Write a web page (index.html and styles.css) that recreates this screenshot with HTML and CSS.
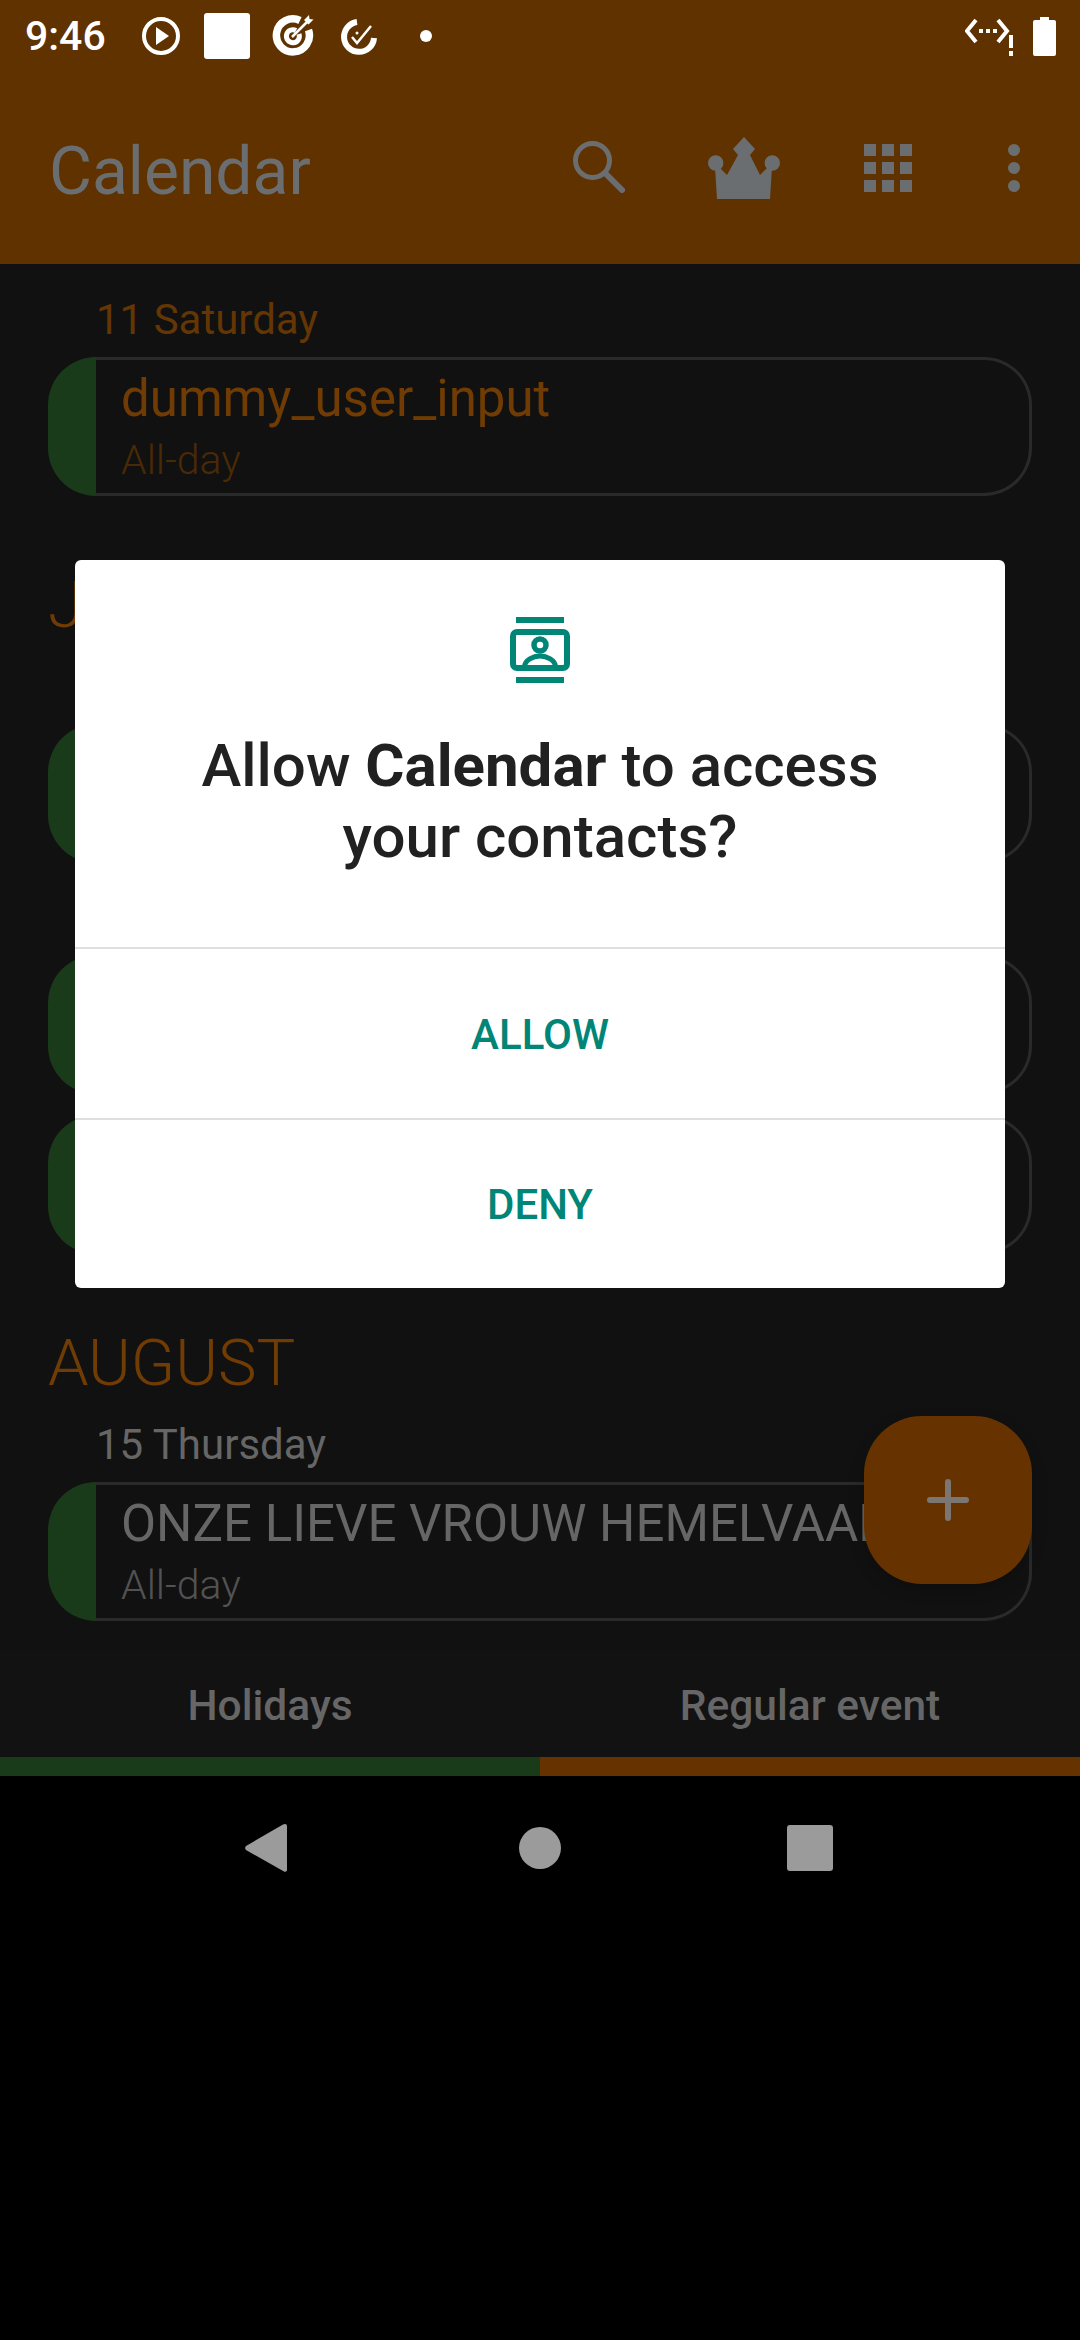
FILE: index.html
```html
<!DOCTYPE html>
<html lang="en">
<head>
    <meta charset="UTF-8">
    <meta name="viewport" content="width=device-width, initial-scale=1.0">
    <title>Calendar</title>
    <link rel="stylesheet" href="styles.css">
</head>
<body>
    <div class="screen">
        <header class="top">
            <div class="status">
                <span class="clock">9:46</span>
                <svg class="st-icon" width="40" height="40" viewBox="0 0 40 40"><circle cx="20" cy="20" r="17" fill="none" stroke="#fff" stroke-width="4"/><path d="M15 11l13 9-13 9z" fill="#fff"/></svg>
                <span class="st-square"></span>
                <svg class="st-icon" width="44" height="44" viewBox="0 0 44 44"><path d="M29 6.500A16.500 16.500 0 1 0 37.500 16" fill="none" stroke="#fff" stroke-width="7.500"/><path d="M25 16.500A6.500 6.500 0 1 0 28 20" fill="none" stroke="#fff" stroke-width="5"/><path d="M21 23L37 7" stroke="#fff" stroke-width="2.500"/><path d="M33 6l5-5 .5 4 4 .5-5 5z" fill="#fff"/></svg>
                <svg class="st-icon st-check" width="38" height="38" viewBox="0 0 38 38"><path d="M17 5A15 15 0 1 0 34 21" fill="none" stroke="#fff" stroke-width="6"/><path d="M12 20l5 6 14-17" fill="none" stroke="#fff" stroke-width="2.500"/><circle cx="17" cy="16" r="1.500" fill="#fff"/></svg>
                <span class="st-dot"></span>
                <span class="st-right">
                    <svg width="50" height="42" viewBox="0 0 50 42"><path d="M11 5L2 16l9 11M33 5l9 11-9 11" fill="none" stroke="#fff" stroke-width="4"/><path d="M14 14h4v4h-4zM21 14h4v4h-4zM28 14h4v4h-4z" fill="#fff"/><path d="M44 20h4v13h-4zM44 36h4v5h-4z" fill="#fff"/></svg>
                    <svg width="23" height="39" viewBox="0 0 23 39"><path d="M7 0h9v3h5a2 2 0 0 1 2 2v32a2 2 0 0 1-2 2H2a2 2 0 0 1-2-2V5a2 2 0 0 1 2-2h5z" fill="#fff"/></svg>
                </span>
            </div>
            <div class="appbar">
                <h1 class="app-title">Calendar</h1>
                <svg class="ab-search" width="52" height="52" viewBox="0 0 52 52"><circle cx="19.500" cy="19.500" r="17" fill="none" stroke="#6b6e70" stroke-width="5"/><path d="M33 33l16 16" stroke="#6b6e70" stroke-width="6" stroke-linecap="round"/></svg>
                <svg class="ab-crown" width="72" height="64" viewBox="0 0 72 64"><g fill="#6b6e70"><path d="M36 0l11 12-5 6 10 20 9-9 3 1-2 32H9L7 30l3-1 9 9 11-20-5-6z"/><circle cx="7.700" cy="26" r="7.700"/><circle cx="64.300" cy="26" r="7.700"/></g></svg>
                <div class="ab-grid">
                    <i></i><i></i><i></i><i></i><i></i><i></i><i></i><i></i><i></i>
                </div>
                <div class="ab-more"><i></i><i></i><i></i></div>
            </div>
        </header>

        <main class="list">
            <div class="day orange">11 Saturday</div>
            <div class="event">
                <div class="band"></div>
                <div class="event-body">
                    <div class="event-title orange">dummy_user_input</div>
                    <div class="event-sub orange-dim">All-day</div>
                </div>
            </div>

            <div class="month">JULY</div>
            <div class="day"></div>
            <div class="event">
                <div class="band"></div>
                <div class="event-body"></div>
            </div>
            <div class="day"></div>
            <div class="event">
                <div class="band"></div>
                <div class="event-body"></div>
            </div>
            <div class="event">
                <div class="band"></div>
                <div class="event-body"></div>
            </div>

            <div class="month">AUGUST</div>
            <div class="day">15 Thursday</div>
            <div class="event">
                <div class="band"></div>
                <div class="event-body">
                    <div class="event-title">ONZE LIEVE VROUW HEMELVAART</div>
                    <div class="event-sub">All-day</div>
                </div>
            </div>
        </main>

        <div class="tabs">
            <div class="tab tab-green">Holidays</div>
            <div class="tab tab-orange">Regular event</div>
        </div>

        <nav class="navbar">
            <svg class="nav-back" width="44" height="50" viewBox="0 0 44 50"><path d="M41 1a2 2 0 0 1 2 2v44a2 2 0 0 1-3 1.500L2 27a3 3 0 0 1 0-4L39 1.500z" fill="#9b9b9b"/></svg>
            <span class="nav-home"></span>
            <span class="nav-recent"></span>
        </nav>

        <button class="fab">
            <svg width="42" height="42" viewBox="0 0 42 42"><path d="M21 3v36M3 21h36" stroke="#7c7672" stroke-width="6" stroke-linecap="round"/></svg>
        </button>

        <div class="dialog">
            <div class="dialog-head">
                <svg width="60" height="66" viewBox="0 0 60 66"><path d="M6 0h48v6H6zM6 60h48v6H6z" fill="#008577"/><rect x="3" y="15" width="54" height="36" rx="4" fill="none" stroke="#008577" stroke-width="6"/><circle cx="30" cy="28" r="6" fill="none" stroke="#008577" stroke-width="5.500"/><path d="M14.500 50c0-7 9-11 15.500-11s15.500 4 15.500 11" fill="none" stroke="#008577" stroke-width="5"/></svg>
                <p class="dialog-text">Allow <b>Calendar</b> to access<br>your contacts?</p>
            </div>
            <div class="dialog-btn">ALLOW</div>
            <div class="dialog-btn">DENY</div>
        </div>
    </div>
</body>
</html>
```

FILE: styles.css
```css
* {
    box-sizing: border-box;
}
body {
    margin: 0;
    background: #000;
    font-family: Roboto, sans-serif;
}
.screen {
    position: relative;
    width: 1080px;
    height: 2340px;
    overflow: hidden;
    display: flex;
    flex-direction: column;
}

/* status bar + app bar */
.top {
    height: 264px;
    background: #5f3200;
}
.status {
    height: 72px;
    padding: 0 24px 0 25px;
    display: flex;
    align-items: center;
}
.clock {
    width: 116px;
    color: #fff;
    font-size: 41px;
    font-weight: 500;
}
.st-square {
    width: 46px;
    height: 46px;
    margin: 0 21px 0 23px;
    background: #fff;
    border-radius: 3px;
}
.st-icon {
    display: block;
}
.st-check {
    margin-left: 25px;
}
.st-dot {
    width: 12px;
    height: 12px;
    margin-left: 42px;
    border-radius: 50%;
    background: #fff;
}
.st-right {
    margin-left: auto;
    display: flex;
    align-items: center;
    gap: 18px;
}
.appbar {
    height: 192px;
    padding: 6px 0 0 49px;
    display: flex;
    align-items: center;
}
.app-title {
    margin: 0;
    width: 524px;
    color: #6b6e70;
    font-size: 66px;
    font-weight: 400;
}
.ab-search {
    margin-bottom: 8px;
}
.ab-crown {
    margin: 0 0 4px 83px;
}
.ab-grid {
    margin: 0 0 6px 84px;
    display: grid;
    grid-template-columns: repeat(3, 12px);
    gap: 6px;
}
.ab-grid i {
    height: 12px;
    background: #6b6e70;
}
.ab-more {
    margin: 0 0 6px 96px;
    display: flex;
    flex-direction: column;
    gap: 6px;
}
.ab-more i {
    width: 12px;
    height: 12px;
    border-radius: 50%;
    background: #6b6e70;
}

/* event list */
.list {
    height: 1386px;
    padding: 22px 48px 0;
    background: #111;
    overflow: hidden;
}
.month {
    height: 136px;
    padding-top: 49px;
    color: #703c04;
    font-size: 65px;
    font-weight: 300;
    line-height: 78px;
}
.day {
    height: 71px;
    padding: 7px 0 0 48px;
    color: #666;
    font-size: 42px;
    line-height: 54px;
}
.day.orange {
    color: #643604;
}
.event {
    height: 139px;
    margin-bottom: 21px;
    display: flex;
}
.band {
    width: 48px;
    background: #1a3b1a;
    border-radius: 48px 0 0 48px;
}
.event-body {
    flex: 1;
    min-width: 0;
    padding: 9px 0 0 25px;
    border: 3px solid #2a2a2a;
    border-left: none;
    border-radius: 0 48px 48px 0;
    white-space: nowrap;
}
.event-title {
    color: #666;
    font-size: 51px;
    line-height: 60px;
}
.event-sub {
    margin-top: 6px;
    color: #525252;
    font-size: 41px;
    font-weight: 300;
    line-height: 50px;
}
.event-title.orange {
    color: #703c04;
}
.event-sub.orange-dim {
    color: #4a2906;
}

/* bottom tabs */
.tabs {
    height: 126px;
    display: flex;
    background: #121212;
}
.tab {
    flex: 1;
    padding-top: 2px;
    color: #666;
    font-size: 42.500px;
    font-weight: 500;
    text-align: center;
    line-height: 107px;
}
.tab-green {
    border-bottom: 19px solid #1a3b1a;
}
.tab-orange {
    border-bottom: 19px solid #663300;
}
.navbar {
    height: 144px;
    padding: 0 135px;
    background: #000;
    display: grid;
    grid-template-columns: repeat(3, 270px);
    place-items: center;
}
.nav-back {
    margin-right: 8px;
}
.nav-home {
    width: 42px;
    height: 42px;
    border-radius: 50%;
    background: #9b9b9b;
}
.nav-recent {
    width: 46px;
    height: 46px;
    border-radius: 3px;
    background: #9b9b9b;
}

/* floating parts */
.fab {
    position: absolute;
    left: 864px;
    top: 1416px;
    width: 168px;
    height: 168px;
    padding: 0;
    border: none;
    border-radius: 58px;
    background: #663300;
    box-shadow: 0 6px 16px rgba(0, 0, 0, 0.2);
    display: flex;
    align-items: center;
    justify-content: center;
}
.dialog {
    position: absolute;
    left: 75px;
    top: 560px;
    width: 930px;
    height: 728px;
    background: #fff;
    border-radius: 6px;
    display: flex;
    flex-direction: column;
}
.dialog-head {
    height: 387px;
    padding-top: 57px;
    text-align: center;
}
.dialog-head svg {
    display: block;
    margin: 0 auto;
}
.dialog-text {
    margin: 47px 0 0;
    color: #212121;
    font-size: 60px;
    font-weight: 500;
    line-height: 71px;
}
.dialog-text b {
    font-weight: 700;
}
.dialog-btn {
    flex: 1;
    padding-top: 2px;
    border-top: 2px solid #dfdfdf;
    color: #008577;
    font-size: 42px;
    font-weight: 500;
    display: flex;
    align-items: center;
    justify-content: center;
}
```
